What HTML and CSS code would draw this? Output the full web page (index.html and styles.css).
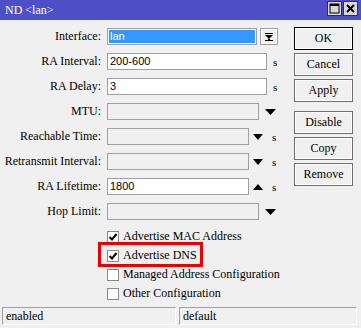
FILE: index.html
```html
<!DOCTYPE html>
<html lang="en">
<head>
  <meta charset="UTF-8">
  <title>ND &lt;lan&gt;</title>
  <link rel="stylesheet" href="styles.css">
</head>
<body>
  <div class="window">
    <!-- Title Bar -->
    <div class="titlebar">
      <span class="title">ND &lt;lan&gt;</span>
      <div class="win-btns">
        <span class="win-btn">
          <svg width="11" height="11" viewBox="0 0 11 11"><rect x="1" y="1" width="9" height="9" fill="none" stroke="#000" stroke-width="1"/><rect x="1" y="1" width="9" height="2" fill="#000"/></svg>
        </span>
        <span class="win-btn">
          <svg width="11" height="11" viewBox="0 0 11 11"><path d="M2 2 L9 9 M9 2 L2 9" stroke="#000" stroke-width="2"/></svg>
        </span>
      </div>
    </div>

    <div class="main">
      <div class="form">
        <div class="row">
          <label>Interface:</label>
          <div class="field">
            <span class="input selected w150">lan</span>
            <span class="dd-btn">
              <svg width="10" height="10" viewBox="0 0 10 10"><rect x="1" y="1" width="8" height="1" fill="#000"/><polygon points="1,3 9,3 5,7" fill="#000"/><rect x="4" y="7" width="2" height="1" fill="#000"/><rect x="1" y="8" width="8" height="1" fill="#000"/></svg>
            </span>
          </div>
        </div>

        <div class="row">
          <label>RA Interval:</label>
          <div class="field">
            <span class="input w160">200-600</span>
            <span class="unit">s</span>
          </div>
        </div>

        <div class="row">
          <label>RA Delay:</label>
          <div class="field">
            <span class="input w160">3</span>
            <span class="unit">s</span>
          </div>
        </div>

        <div class="row">
          <label>MTU:</label>
          <div class="field">
            <span class="input off w152"></span>
            <svg class="tri tri-wide" width="11" height="6" viewBox="0 0 11 6"><polygon points="0,0 11,0 5.5,6" fill="#000"/></svg>
          </div>
        </div>

        <div class="row">
          <label>Reachable Time:</label>
          <div class="field">
            <span class="input off w142"></span>
            <svg class="tri" width="10" height="6" viewBox="0 0 10 6"><polygon points="0,0 10,0 5,6" fill="#000"/></svg>
            <span class="unit">s</span>
          </div>
        </div>

        <div class="row">
          <label>Retransmit Interval:</label>
          <div class="field">
            <span class="input off w142"></span>
            <svg class="tri" width="10" height="6" viewBox="0 0 10 6"><polygon points="0,0 10,0 5,6" fill="#000"/></svg>
            <span class="unit">s</span>
          </div>
        </div>

        <div class="row">
          <label>RA Lifetime:</label>
          <div class="field">
            <span class="input w142">1800</span>
            <svg class="tri" width="10" height="6" viewBox="0 0 10 6"><polygon points="0,6 10,6 5,0" fill="#000"/></svg>
            <span class="unit">s</span>
          </div>
        </div>

        <div class="row">
          <label>Hop Limit:</label>
          <div class="field">
            <span class="input off w152"></span>
            <svg class="tri tri-wide" width="11" height="6" viewBox="0 0 11 6"><polygon points="0,0 11,0 5.5,6" fill="#000"/></svg>
          </div>
        </div>

        <div class="checks">
          <div class="check">
            <span class="box"><svg width="10" height="10" viewBox="0 0 10 10"><path d="M1.5 5 L4 7.5 L8.5 2" fill="none" stroke="#000" stroke-width="2"/></svg></span>
            Advertise MAC Address
          </div>
          <div class="check hl">
            <span class="box"><svg width="10" height="10" viewBox="0 0 10 10"><path d="M1.5 5 L4 7.5 L8.5 2" fill="none" stroke="#000" stroke-width="2"/></svg></span>
            Advertise DNS
          </div>
          <div class="check">
            <span class="box"></span>
            Managed Address Configuration
          </div>
          <div class="check">
            <span class="box"></span>
            Other Configuration
          </div>
        </div>
      </div>

      <div class="buttons">
        <button class="btn default">OK</button>
        <button class="btn">Cancel</button>
        <button class="btn">Apply</button>
        <button class="btn spaced">Disable</button>
        <button class="btn">Copy</button>
        <button class="btn">Remove</button>
      </div>
    </div>

    <!-- Status Bar -->
    <div class="status">
      <span class="status-box first">enabled</span>
      <span class="status-box">default</span>
    </div>
  </div>
</body>
</html>
```

FILE: styles.css
```css
body {
  margin: 0;
  padding: 0;
  font-family: "Liberation Serif", serif;
  font-size: 12px;
}

.window {
  width: 361px;
  height: 328px;
  background-color: #f0f0f0;
  overflow: hidden;
}

/* Title Bar */
.titlebar {
  height: 20px;
  background-color: #4e4fc6;
  display: flex;
  align-items: center;
  justify-content: space-between;
  padding: 0 3px 0 5px;
}

.title {
  color: white;
  font-size: 12px;
}

.win-btns {
  display: flex;
  gap: 1px;
  margin-top: -3px;
}

.win-btn {
  width: 15px;
  height: 15px;
  box-sizing: border-box;
  background-color: #d8d8d8;
  border: 1px solid #333;
  display: flex;
  align-items: center;
  justify-content: center;
}

.main {
  display: flex;
  padding-top: 4px;
}

.form {
  width: 294px;
}

.row {
  display: grid;
  grid-template-columns: 101px 1fr;
  column-gap: 6px;
  height: 25px;
  align-items: center;
}

.row label {
  text-align: right;
  white-space: nowrap;
}

.field {
  display: flex;
  align-items: center;
}

.input {
  height: 17px;
  box-sizing: border-box;
  border: 1px solid #a0a0a0;
  background-color: white;
  font-family: "Liberation Sans", sans-serif;
  font-size: 11px;
  line-height: 15px;
  padding-left: 2px;
}

.input.off {
  background-color: #f0f0f0;
}

.input.selected {
  background-color: #3399ff;
  color: white;
  box-shadow: inset 0 0 0 1px #fff;
}

.w142 { width: 142px; }
.w150 { width: 150px; }
.w152 { width: 152px; }
.w160 { width: 160px; }

.dd-btn {
  width: 18px;
  height: 17px;
  box-sizing: border-box;
  margin-left: 3px;
  border: 1px solid #a0a0a0;
  box-shadow: inset 0 0 0 1px #fff;
  display: flex;
  align-items: center;
  justify-content: center;
}

.unit {
  margin-left: 6px;
  font-size: 11px;
}

.tri {
  margin-left: 4px;
}

.tri + .unit {
  margin-left: 9px;
}

.tri-wide {
  margin-left: 6px;
}

/* Checkboxes */
.checks {
  margin-left: 107px;
  padding-top: 3px;
}

.check {
  height: 19px;
  display: flex;
  align-items: center;
  gap: 4px;
  white-space: nowrap;
  position: relative;
}

.box {
  width: 12px;
  height: 12px;
  box-sizing: border-box;
  border: 1px solid #8a8a8a;
  background-color: white;
  display: flex;
  align-items: center;
  justify-content: center;
}

.check.hl::after {
  content: "";
  position: absolute;
  left: -9px;
  top: -4px;
  width: 105px;
  height: 25px;
  box-sizing: border-box;
  border: 3px solid #ee0000;
}

/* Side Buttons */
.buttons {
  width: 59px;
  padding-top: 3px;
  display: flex;
  flex-direction: column;
  gap: 3px;
}

.btn {
  height: 23px;
  box-sizing: border-box;
  background-color: #f0f0f0;
  border: 1px solid #707070;
  box-shadow: inset 0 0 0 1px #fdfdfd;
  font-family: "Liberation Serif", serif;
  font-size: 12px;
  padding: 0;
  color: #000;
}

.btn.default {
  border: 1px solid #000;
  box-shadow: inset 0 0 0 1px #fff;
}

.btn.spaced {
  margin-top: 6px;
}

/* Status Bar */
.status {
  display: flex;
  gap: 3px;
  padding: 0 4px 0 2px;
  margin-top: 4px;
}

.status-box {
  height: 18px;
  box-sizing: border-box;
  flex: 1;
  border: 1px solid #fff;
  border-top-color: #a0a0a0;
  border-left-color: #a0a0a0;
  padding-left: 3px;
  line-height: 16px;
}

.status-box.first {
  flex: none;
  width: 174px;
}
```
